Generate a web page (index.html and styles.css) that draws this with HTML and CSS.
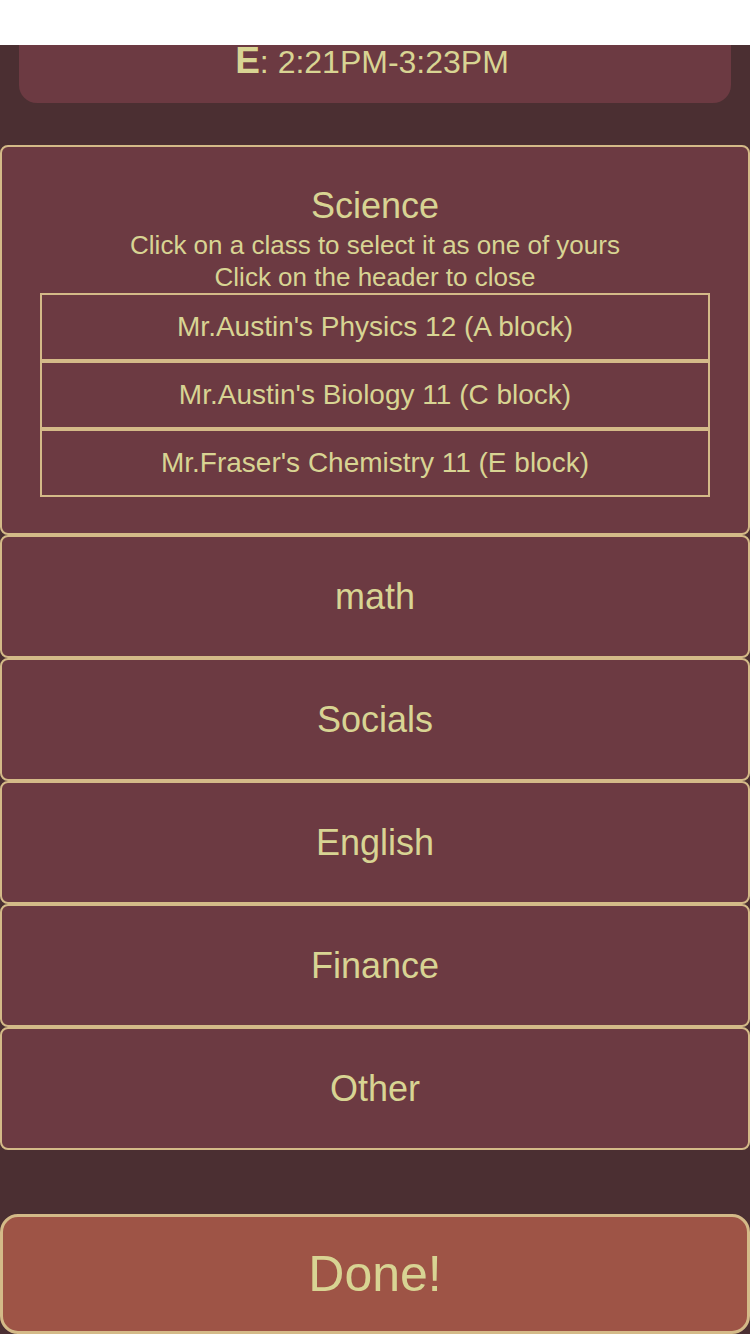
FILE: index.html
```html
<!DOCTYPE html>
<html>
<head>
<meta charset="utf-8">
<link rel="stylesheet" href="styles.css">
</head>
<body>
<div class="statusbar"></div>
<div class="page">
  <div class="timecard">
    <span class="block">E</span><span class="time">: 2:21PM-3:23PM</span>
  </div>
  <div class="categories">
    <div class="cat open">
      <div class="cat-title">Science</div>
      <div class="cat-sub">Click on a class to select it as one of yours</div>
      <div class="cat-sub">Click on the header to close</div>
      <div class="classlist">
        <div class="class-item">Mr.Austin's Physics 12 (A block)</div>
        <div class="class-item">Mr.Austin's Biology 11 (C block)</div>
        <div class="class-item">Mr.Fraser's Chemistry 11 (E block)</div>
      </div>
    </div>
    <div class="cat closed">math</div>
    <div class="cat closed">Socials</div>
    <div class="cat closed">English</div>
    <div class="cat closed">Finance</div>
    <div class="cat closed">Other</div>
  </div>
  <div class="done">Done!</div>
</div>
</body>
</html>
```

FILE: styles.css
```css
html, body {
  margin: 0;
  padding: 0;
}
body {
  background: #4b2f32;
  font-family: "Liberation Sans", Arial, Helvetica, sans-serif;
  color: #d8d493;
  width: 750px;
  height: 1334px;
  overflow: hidden;
}
.statusbar {
  height: 45px;
  background: #ffffff;
}
.page {
  display: flex;
  flex-direction: column;
}
.timecard {
  margin: 0 19px;
  height: 58px;
  background: #6c3a42;
  border-radius: 0 0 18px 18px;
  text-align: center;
  line-height: 31px;
  box-sizing: border-box;
  padding-right: 6px;
}
.timecard .block {
  font-weight: bold;
  font-size: 37px;
}
.timecard .time {
  font-size: 32px;
}
.categories {
  margin-top: 42px;
  display: flex;
  flex-direction: column;
}
.cat {
  background: #6c3a42;
  border: 2px solid #d4ba88;
  border-radius: 8px;
  box-sizing: border-box;
  text-align: center;
}
.cat.open {
  height: 390px;
  padding: 39px 38px 0;
}
.cat-title {
  font-size: 36px;
  line-height: 40px;
  margin-bottom: 3px;
}
.cat-sub {
  font-size: 26px;
  line-height: 32px;
}
.classlist {
  display: flex;
  flex-direction: column;
}
.class-item {
  height: 68px;
  border: 2px solid #d4ba88;
  box-sizing: border-box;
  display: flex;
  align-items: center;
  justify-content: center;
  font-size: 28px;
}
.cat.closed {
  height: 123px;
  display: flex;
  align-items: center;
  justify-content: center;
  font-size: 36px;
}
.done {
  margin-top: 64px;
  height: 120px;
  background: #9e5446;
  border: 3px solid #d4ba88;
  border-radius: 18px;
  box-sizing: border-box;
  display: flex;
  align-items: center;
  justify-content: center;
  font-size: 50px;
}
```
